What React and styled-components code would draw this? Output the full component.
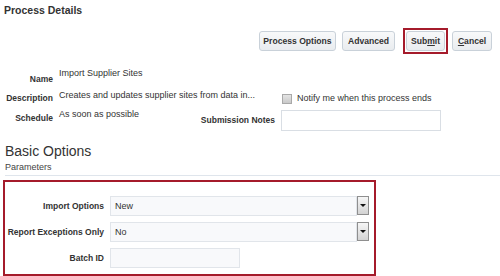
import React from 'react';
import styled, { createGlobalStyle } from 'styled-components';

const GlobalStyle = createGlobalStyle`
    html, body {
        margin: 0;
        padding: 0;
        background: #fff;
    }
    body {
        font-family: 'Liberation Sans', Arial, sans-serif;
        color: #333;
    }
`

const Page = styled.div`
    width: 500px;
    height: 276px;
    overflow: hidden;
    padding-top: 4px;
    box-sizing: border-box;
`

const Title = styled.div`
    margin-left: 4px;
    font-size: 10.5px;
    line-height: 12px;
    font-weight: bold;
    color: #333;
`

/* ------------------------------------------------------------------ */
/* toolbar with the four buttons */

const Toolbar = styled.div`
    margin-top: 12px;
    height: 26px;
    display: flex;
    align-items: center;
    justify-content: flex-end;
    padding-right: 8px;
`

const Button = styled.button`
    width: ${({ w }) => w}px;
    height: 20px;
    margin-left: ${({ ml }) => ml || 0}px;
    padding: 0;
    border: 1px solid #c9d1d9;
    border-radius: 3px;
    background: linear-gradient(#f8f9fa, #e9ecef);
    font-family: 'Liberation Sans', Arial, sans-serif;
    font-size: 8.6px;
    font-weight: bold;
    color: #333;
    box-sizing: border-box;
    display: flex;
    align-items: center;
    justify-content: center;

    u {
        text-decoration: underline;
    }
`

const Highlight = styled.div`
    margin-left: ${({ ml }) => ml || 0}px;
    border: 2px solid #a51b2b;
    padding: 1px 1px;
    display: flex;
`

/* ------------------------------------------------------------------ */
/* header form */

const Form = styled.div`
    margin-top: 14px;
    display: grid;
    grid-template-columns: 53px 160px 50px 160px;
    grid-template-rows: 22px 19px 22px;
    column-gap: 6px;
`

/* flex-end so a long label spills out to the left, not the right */
const Label = styled.div`
    display: flex;
    justify-content: flex-end;
    font-size: 8.5px;
    line-height: 11px;
    font-weight: bold;
    color: #333;
    white-space: nowrap;
    padding-top: ${({ pt }) => pt || 0}px;
    grid-column: ${({ col }) => col || 1};
`

const Value = styled.div`
    font-size: 9px;
    line-height: 11px;
    color: #333;
    white-space: nowrap;
    grid-column: ${({ span }) => (span ? '2 / span 2' : 2)};
`

const CheckRow = styled.div`
    grid-column: 4;
    display: flex;
    align-items: flex-start;
    padding-top: 3px;
    font-size: 9px;
    line-height: 11px;
    color: #333;
    white-space: nowrap;
`

const CheckBox = styled.span`
    width: 10px;
    height: 10px;
    margin: 1px 5px 0 1px;
    box-sizing: border-box;
    border: 1px solid #a9a9a9;
    background: linear-gradient(#e4e4e4, #c9c9c9);
`

const TextInput = styled.div`
    grid-column: 4;
    margin-top: 1px;
    width: 160px;
    height: 21px;
    box-sizing: border-box;
    border: 1px solid #d9dee4;
    background: #fff;
`

/* ------------------------------------------------------------------ */
/* Basic Options */

const SectionTitle = styled.div`
    margin-top: 12px;
    margin-left: 5px;
    font-size: 14px;
    line-height: 16px;
    color: #333;
`

const SubTitle = styled.div`
    margin-top: 3px;
    margin-left: 5px;
    padding-bottom: 2px;
    font-size: 9px;
    line-height: 11px;
    color: #444;
    border-bottom: 1px solid #dfe5ec;
`

const ParamBox = styled.div`
    margin: 4px 0 0 3px;
    width: 373px;
    box-sizing: border-box;
    border: 2px solid #a51b2b;
    padding: 14px 0 6px 0;
    display: grid;
    grid-template-columns: 99px 1fr;
    grid-auto-rows: 20px;
    row-gap: 6px;
    column-gap: 6px;
    align-items: center;
`

const ParamLabel = styled.div`
    text-align: right;
    font-size: 8.5px;
    font-weight: bold;
    color: #333;
    white-space: nowrap;
`

const Select = styled.div`
    display: flex;
    height: 20px;
`

const SelectField = styled.div`
    width: 247px;
    box-sizing: border-box;
    border: 1px solid #e1e5ea;
    background: #f8f9fb;
    padding-left: 4px;
    font-size: 9px;
    line-height: 18px;
    color: #333;
`

const SelectButton = styled.div`
    width: 12px;
    height: 19px;
    box-sizing: border-box;
    border: 1px solid #8f8f8f;
    background: linear-gradient(#f6f6f6, #d3d3d3);
    display: flex;
    align-items: center;
    justify-content: center;
`

const Caret = styled.span`
    width: 0;
    height: 0;
    border-left: 3px solid transparent;
    border-right: 3px solid transparent;
    border-top: 3px solid #111;
    margin-top: -1px;
`

const BatchInput = styled.div`
    width: 130px;
    height: 20px;
    box-sizing: border-box;
    border: 1px solid #e1e5ea;
    background: #f8f9fb;
`

function Dropdown({ value }) {
    return (
        <Select>
            <SelectField>{value}</SelectField>
            <SelectButton><Caret /></SelectButton>
        </Select>
    );
}

export default function App() {
    return (
        <Page>
            <GlobalStyle />
            <Title>Process Details</Title>

            <Toolbar>
                <Button w={77}>Process Options</Button>
                <Button w={53} ml={6}>Advanced</Button>
                <Highlight ml={8}>
                    <Button w={39}>Sub<u>m</u>it</Button>
                </Highlight>
                <Button w={40} ml={4}><u>C</u>ancel</Button>
            </Toolbar>

            <Form>
                <Label pt={5.5}>Name</Label>
                <Value>Import Supplier Sites</Value>
                <div />
                <div />

                <Label pt={3}>Description</Label>
                <Value span>Creates and updates supplier sites from data in...</Value>
                <CheckRow>
                    <CheckBox />
                    Notify me when this process ends
                </CheckRow>

                <Label pt={4}>Schedule</Label>
                <Value>As soon as possible</Value>
                <Label col={3} pt={6}>Submission Notes</Label>
                <TextInput />
            </Form>

            <SectionTitle>Basic Options</SectionTitle>
            <SubTitle>Parameters</SubTitle>

            <ParamBox>
                <ParamLabel>Import Options</ParamLabel>
                <Dropdown value="New" />
                <ParamLabel>Report Exceptions Only</ParamLabel>
                <Dropdown value="No" />
                <ParamLabel>Batch ID</ParamLabel>
                <BatchInput />
            </ParamBox>
        </Page>
    );
}
